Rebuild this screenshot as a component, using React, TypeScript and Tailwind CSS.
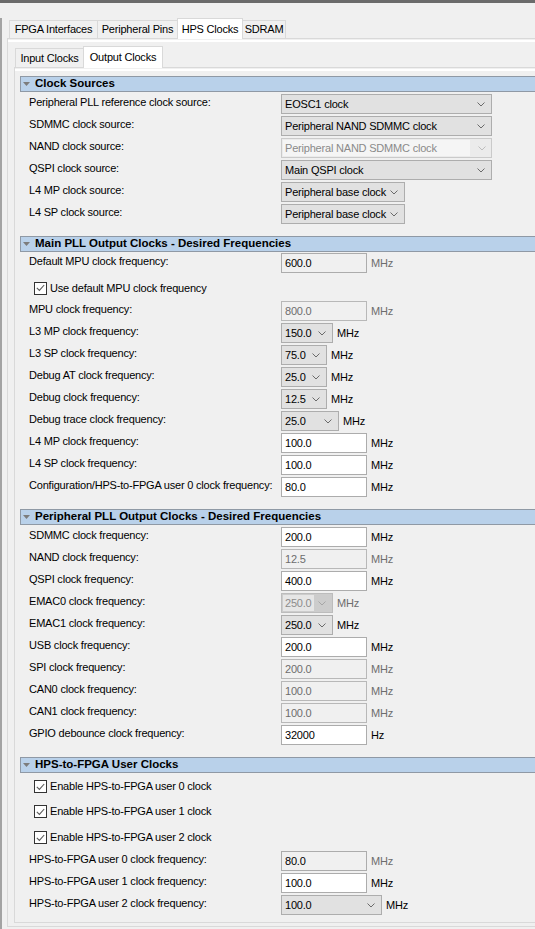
import React from "react";

// Qsys-style HPS component editor: "HPS Clocks" > "Output Clocks" tab

function Chevron({ c = "#6a6a6a" }: { c?: string }) {
  return (
    <svg width="8" height="5" viewBox="0 0 8 5" className="shrink-0">
      <path d="M0.5 0.5 L4 4 L7.5 0.5" fill="none" stroke={c} strokeWidth="1" />
    </svg>
  );
}

function Combo({ value, w, mode }: { value: string; w: string; mode?: "off" | "grey" }) {
  if (mode === "off") {
    return (
      <div className={`${w} flex h-[20px] items-center border border-[#cacaca] bg-[#ebebeb] pr-[5px]`}>
        <span className="ml-[1px] flex h-[16px] flex-1 items-center bg-[#f5f5f5] pl-[2px] text-[#8a8a8a]">
          {value}
        </span>
        <span className="ml-[8px]">
          <Chevron c="#bdbdbd" />
        </span>
      </div>
    );
  }
  if (mode === "grey") {
    return (
      <div className={`${w} flex h-[20px] items-center justify-between border border-[#bcbcbc] bg-[#cccccc] pr-[6px]`}>
        <span className="ml-[1px] flex h-[16px] items-center bg-[#e6e6e6] px-[2px] text-[#8c8c8c]">
          {value}
        </span>
        <Chevron c="#a6a6a6" />
      </div>
    );
  }
  return (
    <div className={`${w} flex h-[20px] items-center justify-between border border-[#adadad] bg-[#e1e1e1] pl-[3px] pr-[6px]`}>
      <span className="whitespace-nowrap">{value}</span>
      <Chevron />
    </div>
  );
}

function Field({ value, mode }: { value: string; mode?: "ro" | "off" }) {
  const look =
    mode === "off"
      ? "bg-[#f0f0f0] border-[#b8b8b8] text-[#6d6d6d]"
      : mode === "ro"
        ? "bg-[#f0f0f0] border-[#acacac] text-black"
        : "bg-white border-[#acacac] text-black";
  return (
    <div className={`flex h-[20px] w-[86px] items-center border pl-[3px] ${look}`}>{value}</div>
  );
}

function Unit({ t = "MHz", grey }: { t?: string; grey?: boolean }) {
  return (
    <span className={`ml-[4px] leading-[20px] ${grey ? "text-[#6d6d6d]" : "text-black"}`}>{t}</span>
  );
}

function Row({ label, children }: { label: string; children: React.ReactNode }) {
  return (
    <div className="flex h-[22px] items-start">
      <div className="w-[252px] shrink-0 whitespace-nowrap leading-[16px]">{label}</div>
      <div className="flex items-start">{children}</div>
    </div>
  );
}

function Check({ label, h }: { label: string; h: string }) {
  return (
    <div className={`flex ${h} items-center gap-[3px] pl-[5px]`}>
      <div className="flex h-[13px] w-[13px] items-center justify-center border border-[#333333] bg-white">
        <svg width="9" height="8" viewBox="0 0 9 8">
          <path d="M0.8 3.8 L3.4 6.4 L8.2 1" fill="none" stroke="#5a5a5a" strokeWidth="1.1" />
        </svg>
      </div>
      <span>{label}</span>
    </div>
  );
}

function Section({
  title,
  top,
  pt,
  children,
}: {
  title: string;
  top: string;
  pt: string;
  children: React.ReactNode;
}) {
  return (
    <div className={top}>
      <div className="-mr-[20px] flex h-[16px] items-center border border-[#8f99a5] bg-[#b9d1ea] pl-[2px]">
        <svg width="7" height="4" viewBox="0 0 7 4" className="shrink-0">
          <path d="M0 0 L7 0 L3.5 4 Z" fill="#7c7c7c" />
        </svg>
        <span className="ml-[5px] text-[11.5px] font-bold tracking-normal">{title}</span>
      </div>
      <div className={`flex flex-col pl-[9px] ${pt}`}>{children}</div>
    </div>
  );
}

function Tab({ label, w, on, tall, short }: { label: string; w: string; on?: boolean; tall: string; short: string }) {
  return (
    <div
      className={`${w} -ml-px flex items-center justify-center border border-b-0 border-[#d9d9d9] first:ml-0 ${
        on ? `${tall} relative z-10 -mb-px bg-white` : `${short} bg-[#f0f0f0]`
      }`}
    >
      {label}
    </div>
  );
}

export default function App() {
  return (
    <div className="h-[929px] w-[535px] overflow-hidden bg-[#f0f0f0] font-['Liberation_Sans',Arial,sans-serif] text-[11px] tracking-[-0.2px] text-black">
      <div className="h-[3px] bg-[#6b6b6b]" />
      <div className="h-[926px] border-l-2 border-[#a3a3a3]">
        {/* outer tabs */}
        <div className="flex h-[20px] items-end pl-[7px] mt-[15px]">
          <Tab label="FPGA Interfaces" w="w-[89px]" tall="h-[21px]" short="h-[18px]" />
          <Tab label="Peripheral Pins" w="w-[81px]" tall="h-[21px]" short="h-[18px]" />
          <Tab label="HPS Clocks" w="w-[66px]" on tall="h-[21px]" short="h-[18px]" />
          <Tab label="SDRAM" w="w-[44px]" tall="h-[21px]" short="h-[18px]" />
        </div>

        <div className="-mr-[20px] ml-[5px] border-l border-t border-b border-[#d9d9d9] pb-[3px]">
          <div className="mt-[1px] h-[2px] bg-white" />
          {/* inner tabs */}
          <div className="flex h-[21px] items-end pl-[7px] mt-[4px]">
            <Tab label="Input Clocks" w="w-[69px]" tall="h-[22px]" short="h-[19px]" />
            <Tab label="Output Clocks" w="w-[80px]" on tall="h-[22px]" short="h-[19px]" />
          </div>

          <div className="ml-[6px] border-l border-t border-b border-[#d9d9d9] pb-[5px]">
            <div className="mt-[1px] h-[2px] bg-white" />
            <div className="pl-[5px] pt-[5px]">
              <Section title="Clock Sources" top="" pt="pt-[2px]">
                <Row label="Peripheral PLL reference clock source:">
                  <Combo value="EOSC1 clock" w="w-[211px]" />
                </Row>
                <Row label="SDMMC clock source:">
                  <Combo value="Peripheral NAND SDMMC clock" w="w-[211px]" />
                </Row>
                <Row label="NAND clock source:">
                  <Combo value="Peripheral NAND SDMMC clock" w="w-[211px]" mode="off" />
                </Row>
                <Row label="QSPI clock source:">
                  <Combo value="Main QSPI clock" w="w-[211px]" />
                </Row>
                <Row label="L4 MP clock source:">
                  <Combo value="Peripheral base clock" w="w-[124px]" />
                </Row>
                <Row label="L4 SP clock source:">
                  <Combo value="Peripheral base clock" w="w-[124px]" />
                </Row>
              </Section>

              <Section title="Main PLL Output Clocks - Desired Frequencies" top="mt-[10px]" pt="pt-[1px]">
                <Row label="Default MPU clock frequency:">
                  <Field value="600.0" mode="ro" />
                  <Unit grey />
                </Row>
                <Check label="Use default MPU clock frequency" h="h-[26px]" />
                <Row label="MPU clock frequency:">
                  <Field value="800.0" mode="off" />
                  <Unit grey />
                </Row>
                <Row label="L3 MP clock frequency:">
                  <Combo value="150.0" w="w-[52px]" />
                  <Unit />
                </Row>
                <Row label="L3 SP clock frequency:">
                  <Combo value="75.0" w="w-[46px]" />
                  <Unit />
                </Row>
                <Row label="Debug AT clock frequency:">
                  <Combo value="25.0" w="w-[46px]" />
                  <Unit />
                </Row>
                <Row label="Debug clock frequency:">
                  <Combo value="12.5" w="w-[46px]" />
                  <Unit />
                </Row>
                <Row label="Debug trace clock frequency:">
                  <Combo value="25.0" w="w-[58px]" />
                  <Unit />
                </Row>
                <Row label="L4 MP clock frequency:">
                  <Field value="100.0" />
                  <Unit />
                </Row>
                <Row label="L4 SP clock frequency:">
                  <Field value="100.0" />
                  <Unit />
                </Row>
                <Row label="Configuration/HPS-to-FPGA user 0 clock frequency:">
                  <Field value="80.0" />
                  <Unit />
                </Row>
              </Section>

              <Section title="Peripheral PLL Output Clocks - Desired Frequencies" top="mt-[10px]" pt="pt-[2px]">
                <Row label="SDMMC clock frequency:">
                  <Field value="200.0" />
                  <Unit />
                </Row>
                <Row label="NAND clock frequency:">
                  <Field value="12.5" mode="off" />
                  <Unit grey />
                </Row>
                <Row label="QSPI clock frequency:">
                  <Field value="400.0" />
                  <Unit />
                </Row>
                <Row label="EMAC0 clock frequency:">
                  <Combo value="250.0" w="w-[52px]" mode="grey" />
                  <Unit grey />
                </Row>
                <Row label="EMAC1 clock frequency:">
                  <Combo value="250.0" w="w-[52px]" />
                  <Unit />
                </Row>
                <Row label="USB clock frequency:">
                  <Field value="200.0" />
                  <Unit />
                </Row>
                <Row label="SPI clock frequency:">
                  <Field value="200.0" mode="off" />
                  <Unit grey />
                </Row>
                <Row label="CAN0 clock frequency:">
                  <Field value="100.0" mode="off" />
                  <Unit grey />
                </Row>
                <Row label="CAN1 clock frequency:">
                  <Field value="100.0" mode="off" />
                  <Unit grey />
                </Row>
                <Row label="GPIO debounce clock frequency:">
                  <Field value="32000" />
                  <Unit t="Hz" />
                </Row>
              </Section>

              <Section title="HPS-to-FPGA User Clocks" top="mt-[10px]" pt="pt-[1px]">
                <Check label="Enable HPS-to-FPGA user 0 clock" h="h-[25px]" />
                <Check label="Enable HPS-to-FPGA user 1 clock" h="h-[25px]" />
                <Check label="Enable HPS-to-FPGA user 2 clock" h="h-[27px]" />
                <Row label="HPS-to-FPGA user 0 clock frequency:">
                  <Field value="80.0" mode="ro" />
                  <Unit grey />
                </Row>
                <Row label="HPS-to-FPGA user 1 clock frequency:">
                  <Field value="100.0" />
                  <Unit />
                </Row>
                <Row label="HPS-to-FPGA user 2 clock frequency:">
                  <Combo value="100.0" w="w-[101px]" />
                  <Unit />
                </Row>
              </Section>
            </div>
          </div>
        </div>
      </div>
    </div>
  );
}
